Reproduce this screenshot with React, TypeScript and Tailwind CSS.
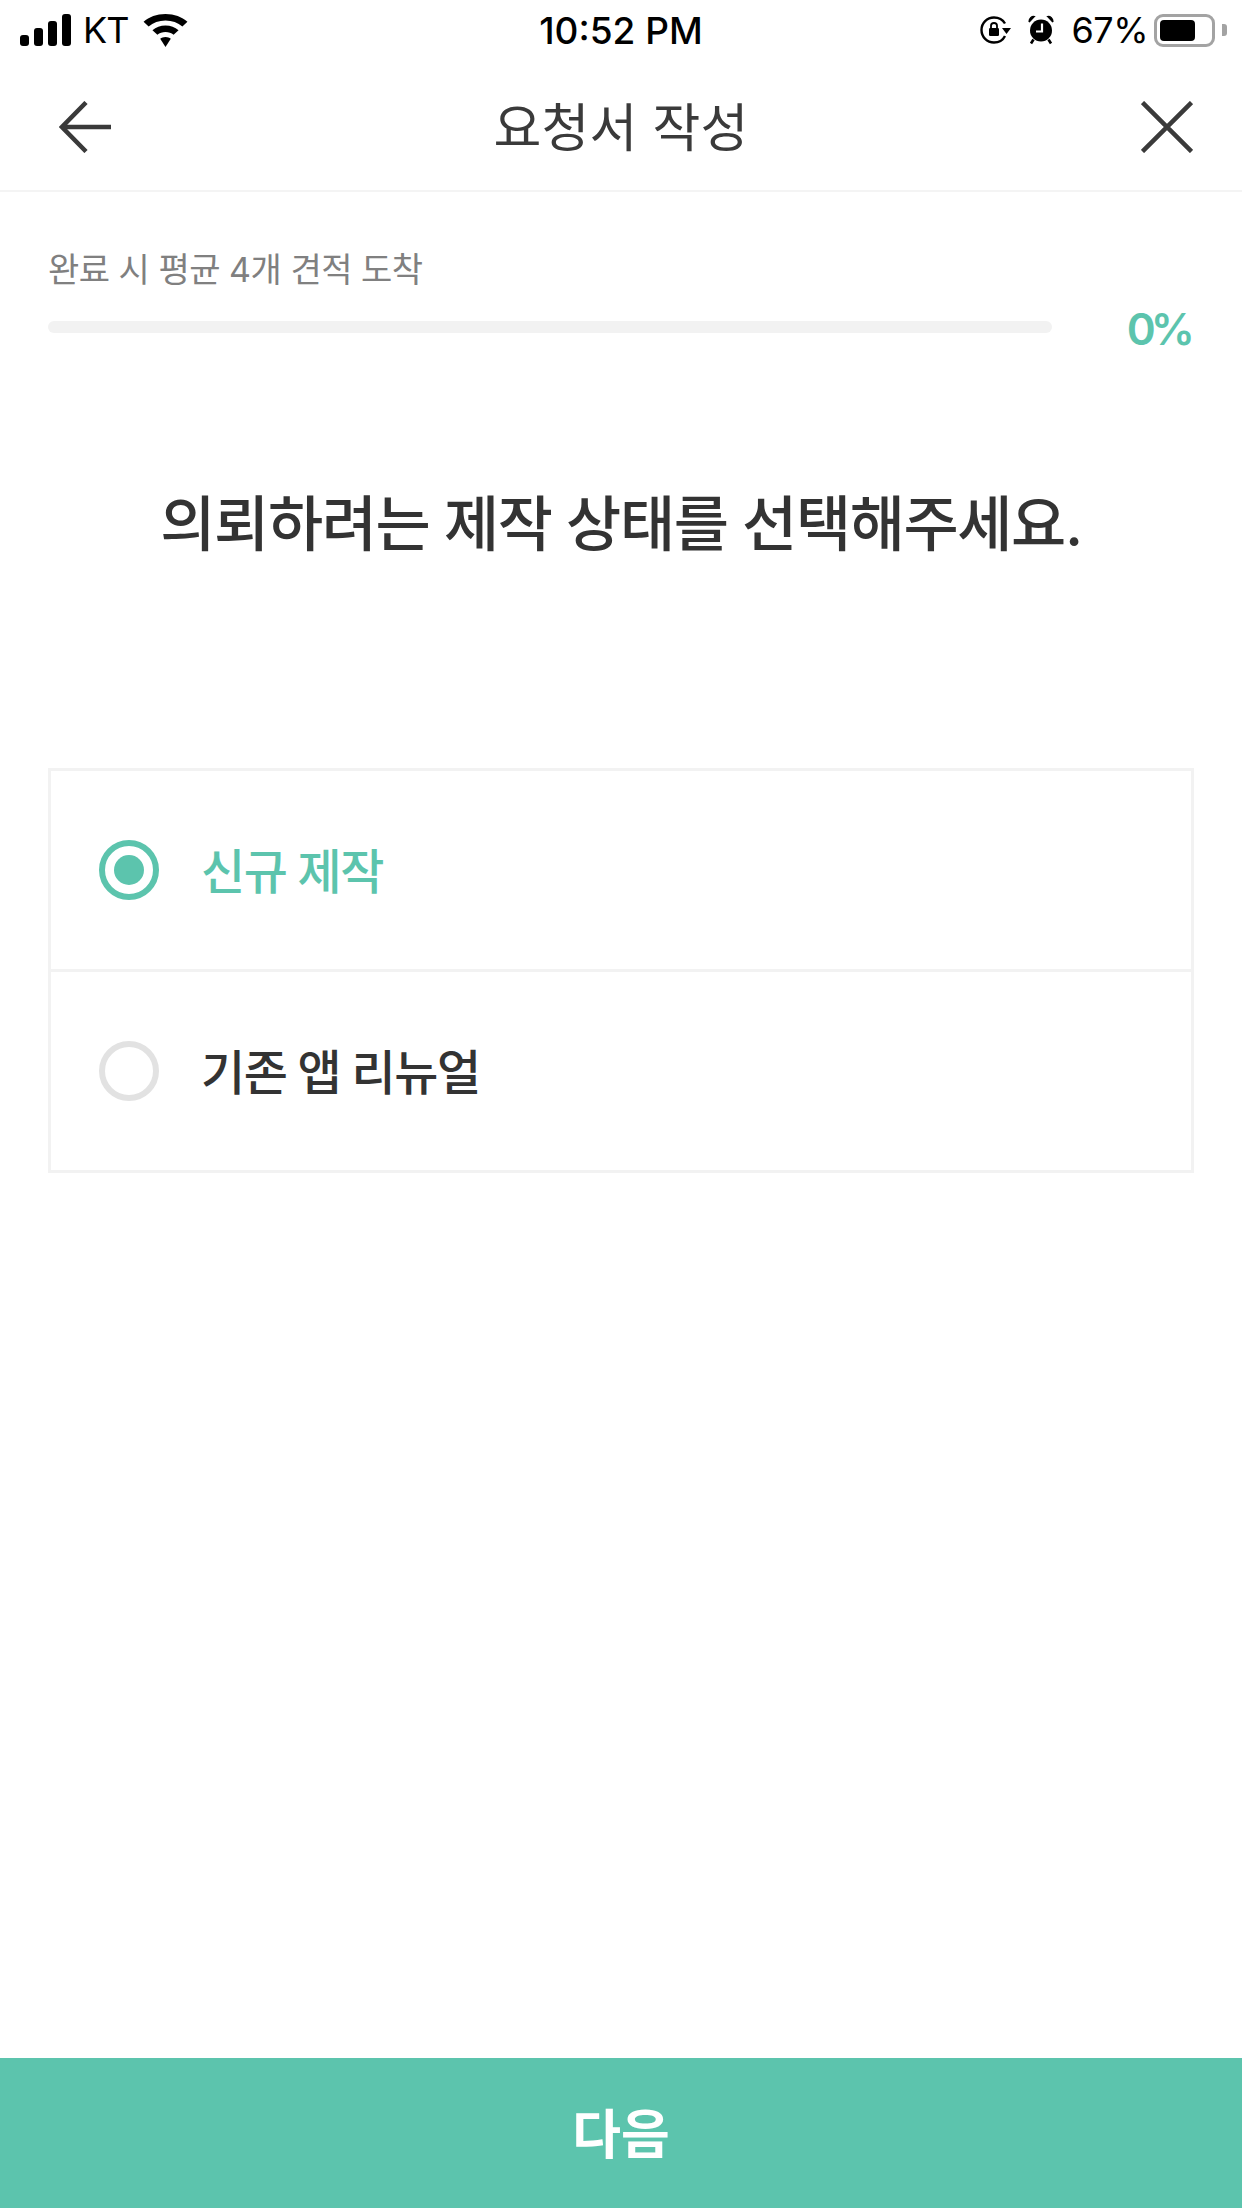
import React, { useState } from 'react';

const FONT = "font-['Inter','Noto_Sans_CJK_KR',sans-serif]";

function SignalIcon() {
  return (
    <svg width="51" height="32" viewBox="0 0 51 32" fill="#000">
      <rect x="0" y="21" width="9" height="11" rx="3" />
      <rect x="14" y="14" width="9" height="18" rx="3" />
      <rect x="28" y="7" width="9" height="25" rx="3" />
      <rect x="42" y="0" width="9" height="32" rx="3" />
    </svg>
  );
}

function WifiIcon() {
  return (
    <svg width="45" height="33" viewBox="0 0 40 33" preserveAspectRatio="none" fill="#000">
      <path d="M20 0C12 0 5.500 3 0.500 7.800L5 12.500C9 8.700 14.200 6.500 20 6.500C25.800 6.500 31 8.700 35 12.500L39.500 7.800C34.500 3 28 0 20 0Z" />
      <path d="M20 11.500C15.500 11.500 11.500 13.200 8.400 16.200L12.800 20.800C14.700 19 17.200 18 20 18C22.800 18 25.300 19 27.200 20.800L31.600 16.200C28.500 13.200 24.500 11.500 20 11.500Z" />
      <path d="M20 23C18 23 16.600 23.700 15.300 24.800L20 33L24.700 24.800C23.400 23.700 22 23 20 23Z" />
    </svg>
  );
}

function RotationLockIcon() {
  return (
    <svg width="31" height="28" viewBox="0 0 31 28" fill="none">
      <path d="M25 7.500C22.800 3.800 19 1.500 14 1.500C7 1.500 1.500 7 1.500 14C1.500 21 7 26.500 14 26.500C19 26.500 23 24 25 20" stroke="#000" strokeWidth="2.400" />
      <path d="M22 12H31L26.500 18Z" fill="#000" />
      <rect x="9" y="12" width="10" height="8" rx="1.200" fill="#000" />
      <path d="M11 12V9.800C11 8 12.300 7 14 7C15.700 7 17 8 17 9.800V12" stroke="#000" strokeWidth="1.800" />
    </svg>
  );
}

function AlarmIcon() {
  return (
    <svg width="26" height="30" viewBox="0 0 26 30" fill="none">
      <circle cx="13" cy="15.500" r="11" fill="#000" />
      <path d="M14 8.500V16.500H8" stroke="#fff" strokeWidth="2.200" />
      <path d="M1 6.500C1 3.500 3.500 1 6.500 1.500L1.500 6.800Z M25 6.500C25 3.500 22.500 1 19.500 1.500L24.500 6.800Z" fill="#000" stroke="#000" strokeWidth="1.200" />
      <path d="M5.500 24.500L3 28.500M20.500 24.500L23 28.500" stroke="#000" strokeWidth="2.600" />
    </svg>
  );
}

function BatteryIcon() {
  return (
    <div className="flex items-center">
      <div className="w-[61px] h-[33px] rounded-[9px] border-[3px] border-[#a3a3a3] p-[3px]">
        <div className="w-[35px] h-full rounded-[4px] bg-black" />
      </div>
      <div className="ml-[7px] w-[5px] h-[12px] rounded-r-[3px] bg-[#a3a3a3]" />
    </div>
  );
}

function StatusBar() {
  return (
    <div className="h-[64px] pb-[4px] grid grid-cols-[1fr_auto_1fr] items-center px-[15px] text-black">
      <div className="flex items-center pl-[5px]">
        <SignalIcon />
        <span className="ml-[12px] text-[36px] leading-none tracking-[-1px]">KT</span>
        <span className="ml-[15px]">
          <WifiIcon />
        </span>
      </div>
      <span className="text-[37px] leading-none font-medium">10:52 PM</span>
      <div className="flex items-center justify-end">
        <RotationLockIcon />
        <span className="ml-[17px]">
          <AlarmIcon />
        </span>
        <span className="ml-[17px] text-[36px] leading-none tracking-[-0.5px]">67%</span>
        <span className="ml-[6px]">
          <BatteryIcon />
        </span>
      </div>
    </div>
  );
}

function Header() {
  return (
    <div className="h-[128px] grid grid-cols-[1fr_auto_1fr] items-center px-[49px] border-b-2 border-[#f4f4f4]">
      <svg width="52" height="52" viewBox="0 0 52 52" fill="none" stroke="#3a3a3a" strokeWidth="4.500" className="ml-[10px]">
        <path d="M27 1.500L3 26L27 50.500" />
        <path d="M3 26H52" />
      </svg>
      <h1 className="pt-[3px] text-[52px] leading-none text-[#3a3a3a] tracking-[0.2px]">요청서 작성</h1>
      <svg width="52" height="52" viewBox="0 0 52 52" fill="none" stroke="#3a3a3a" strokeWidth="4.500" className="justify-self-end">
        <path d="M1.500 1.500L50.500 50.500M50.500 1.500L1.500 50.500" />
      </svg>
    </div>
  );
}

function Progress() {
  return (
    <div className="pt-[55px] pl-[48px] pr-[52px]">
      <p className="text-[34px] leading-[46px] text-[#808080] tracking-[-0.5px]">완료 시 평균 4개 견적 도착</p>
      <div className="flex items-center justify-between mt-[8px]">
        <div className="w-[1004px] h-[12px] rounded-full bg-[#f2f2f2]" />
        <span className="pt-[4px] text-[44px] leading-[48px] font-semibold text-[#5cc4ad] tracking-[-5px]">0%</span>
      </div>
    </div>
  );
}

function Radio({ checked }: { checked: boolean }) {
  return (
    <span className={`w-[60px] h-[60px] rounded-full border-[6px] flex items-center justify-center ${checked ? 'border-[#5cc4ad]' : 'border-[#e2e2e2]'}`}>
      {checked && <span className="w-[30px] h-[30px] rounded-full bg-[#5cc4ad]" />}
    </span>
  );
}

const OPTIONS = ['신규 제작', '기존 앱 리뉴얼'];

export default function App() {
  const [selected, setSelected] = useState(0);

  return (
    <div className={`w-full h-[2208px] flex flex-col bg-white overflow-hidden ${FONT}`}>
      <StatusBar />
      <Header />
      <Progress />

      <h2 className="mt-[131px] text-center text-[60px] leading-[80px] font-medium text-[#333333] tracking-[-1.400px]">
        의뢰하려는 제작 상태를 선택해주세요.
      </h2>

      <div className="mt-[204px] mx-[48px] border-[3px] border-[#f2f2f2] flex flex-col">
        {OPTIONS.map((label, i) => (
          <button
            key={label}
            onClick={() => setSelected(i)}
            className={`pl-[48px] flex items-center gap-[42px] ${i > 0 ? 'h-[201px] border-t-[3px] border-[#f2f2f2]' : 'h-[198px]'}`}
          >
            <Radio checked={selected === i} />
            <span className={`pt-[4px] text-[48px] leading-none font-medium tracking-[-1.500px] ${selected === i ? 'text-[#5cc4ad]' : 'text-[#333333]'}`}>
              {label}
            </span>
          </button>
        ))}
      </div>

      <button className="mt-auto h-[150px] pt-[6px] bg-[#5cc4ad] text-white text-[53px] font-bold">다음</button>
    </div>
  );
}
